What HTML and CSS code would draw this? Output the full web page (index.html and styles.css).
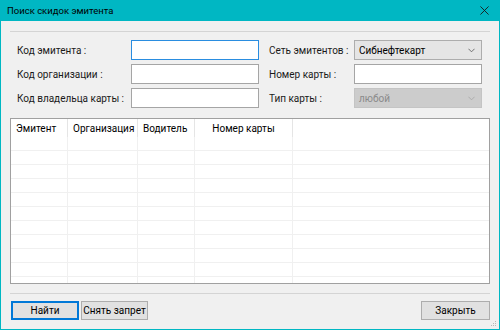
FILE: index.html
```html
<!DOCTYPE html>
<html lang="ru">
<head>
  <meta charset="UTF-8" />
  <title>Поиск скидок эмитента</title>
  <link rel="stylesheet" href="styles.css">
</head>
<body>
  <div class="window">
    <div class="titlebar">
      <span class="title">Поиск скидок эмитента</span>
      <svg class="close" viewBox="0 0 10 10" aria-hidden="true">
        <path d="M0.5 0.5L9.5 9.5M9.5 0.5L0.5 9.5" stroke="#1a1a1a" stroke-width="1" fill="none"/>
      </svg>
    </div>

    <div class="content">
      <div class="separator"></div>

      <!-- Search fields -->
      <div class="form">
        <label class="label">Код эмитента :</label>
        <div class="input focused"></div>
        <label class="label">Сеть эмитентов :</label>
        <div class="select">
          <span>Сибнефтекарт</span>
          <svg class="chevron" viewBox="0 0 8 5" aria-hidden="true"><path d="M0.5 0.5L4 4L7.5 0.5" stroke="#606060" fill="none"/></svg>
        </div>

        <label class="label">Код организации :</label>
        <div class="input"></div>
        <label class="label">Номер карты :</label>
        <div class="input"></div>

        <label class="label">Код владельца карты :</label>
        <div class="input"></div>
        <label class="label">Тип карты :</label>
        <div class="select disabled">
          <span>любой</span>
          <svg class="chevron" viewBox="0 0 8 5" aria-hidden="true"><path d="M0.5 0.5L4 4L7.5 0.5" stroke="#a8a8a8" fill="none"/></svg>
        </div>
      </div>

      <!-- Results grid -->
      <div class="grid">
        <div class="grid-head">
          <div class="cell c1">Эмитент</div>
          <div class="cell c2">Организация</div>
          <div class="cell c3">Водитель</div>
          <div class="cell c4 center">Номер карты</div>
          <div class="cell rest"></div>
        </div>
        <div class="grid-body" id="grid-body"></div>
      </div>

      <div class="separator bottom"></div>

      <div class="buttons">
        <button class="btn default">Найти</button>
        <button class="btn">Снять запрет</button>
        <span class="spacer"></span>
        <button class="btn close-btn">Закрыть</button>
      </div>
    </div>

    <svg class="grip" viewBox="0 0 6 6" aria-hidden="true">
      <rect x="4" y="0" width="1" height="1" fill="#b8b8b8"/>
      <rect x="2" y="2" width="1" height="1" fill="#b8b8b8"/>
      <rect x="4" y="2" width="1" height="1" fill="#b8b8b8"/>
      <rect x="0" y="4" width="1" height="1" fill="#b8b8b8"/>
      <rect x="2" y="4" width="1" height="1" fill="#b8b8b8"/>
      <rect x="4" y="4" width="1" height="1" fill="#b8b8b8"/>
    </svg>
  </div>

  <script>
    // empty rows of the results grid
    const body = document.getElementById('grid-body');
    for (let i = 0; i < 12; i++) {
      const row = document.createElement('div');
      row.className = 'row';
      row.innerHTML = '<div class="cell c1"></div><div class="cell c2"></div>' +
        '<div class="cell c3"></div><div class="cell c4"></div><div class="cell rest"></div>';
      body.appendChild(row);
    }
  </script>
</body>
</html>
```

FILE: styles.css
```css
body {
  margin: 0;
  font-family: Roboto, "Liberation Sans", sans-serif;
  font-size: 10px;
  color: #000;
  background: #f0f0f0;
}

.window {
  position: relative;
  width: 500px;
  height: 330px;
  box-sizing: border-box;
  border: 1px solid #00b7c3;
  border-top: none;
  display: flex;
  flex-direction: column;
  background: #f0f0f0;
}

.titlebar {
  height: 21px;
  margin: 0 -1px;
  background: #00b7c3;
  display: flex;
  align-items: center;
  padding: 0 8px 0 7px;
  flex-shrink: 0;
}

.title {
  font-size: 9.5px;
  color: #000;
  flex: 1;
}

.close {
  width: 9px;
  height: 9px;
  margin-right: 3px;
}

.content {
  flex: 1;
  display: flex;
  flex-direction: column;
  padding: 0 9px;
}

.separator {
  height: 1px;
  background: #d4d4d4;
  margin-top: 10px;
}

.separator.bottom {
  margin-top: 9px;
}

/* Form */
.form {
  display: grid;
  grid-template-columns: 114px 138px 85px 128px;
  grid-auto-rows: 20px;
  row-gap: 4px;
  margin: 8px 0 0 7px;
}

.label {
  display: flex;
  align-items: center;
  white-space: nowrap;
  color: #1a1a1a;
}

.input {
  width: 128px;
  box-sizing: border-box;
  background: #fff;
  border: 1px solid #a5a5a5;
}

.input.focused {
  border-color: #2a8de0;
}

.select {
  box-sizing: border-box;
  background: #e5e5e5;
  border: 1px solid #adadad;
  display: flex;
  align-items: center;
  padding: 0 6px 0 4px;
}

.select span {
  flex: 1;
}

.select.disabled {
  background: #cccccc;
  border-color: #c4c4c4;
  color: #8a8a8a;
}

.chevron {
  width: 7px;
  height: 5px;
}

/* Grid */
.grid {
  margin-top: 10px;
  height: 166px;
  box-sizing: border-box;
  border: 1px solid #a0a0a0;
  background: #fff;
  display: flex;
  flex-direction: column;
  overflow: hidden;
}

.grid-head {
  display: flex;
  height: 18px;
  flex-shrink: 0;
}

.grid-head .cell {
  display: flex;
  align-items: center;
  padding-left: 5px;
  border-right: 1px solid #e5e5e5;
}

.grid-head .cell.center {
  justify-content: center;
  padding-left: 0;
}

.grid-head .cell.rest {
  border-right: none;
}

.grid-body {
  flex: 1;
  display: flex;
  flex-direction: column;
}

.row {
  display: flex;
  height: 14px;
  flex-shrink: 0;
  border-top: 1px solid #f0f0f0;
  box-sizing: border-box;
}

.row:first-child {
  border-top: none;
  height: 13px;
}

.cell {
  box-sizing: border-box;
  border-right: 1px solid #f0f0f0;
  white-space: nowrap;
}

.c1 { width: 57px; }
.c2 { width: 70px; }
.c3 { width: 57px; }
.c4 { width: 98px; }
.rest { flex: 1; border-right: none; }

/* Buttons */
.buttons {
  display: flex;
  margin-top: 7px;
  padding-left: 1px;
  gap: 2px;
}

.spacer {
  flex: 1;
}

.btn {
  height: 19px;
  box-sizing: border-box;
  font-family: inherit;
  font-size: 10px;
  color: #000;
  background: #e1e1e1;
  border: 1px solid #adadad;
  padding: 0;
  width: 67px;
  white-space: nowrap;
}

.btn.default {
  border: 2px solid #0078d7;
  width: 68px;
}

.close-btn {
  width: 69px;
}

.grip {
  position: absolute;
  right: 2px;
  bottom: 2px;
  width: 6px;
  height: 6px;
}
```
